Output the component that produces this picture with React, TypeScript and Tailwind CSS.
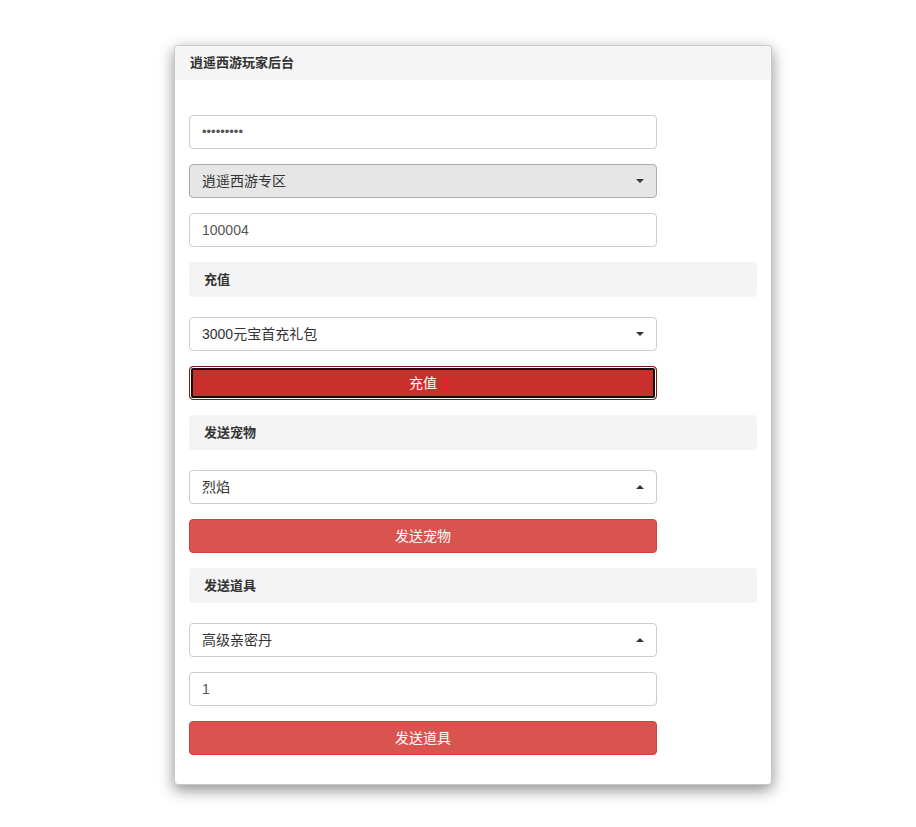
const font = { fontFamily: '"Liberation Sans", "Noto Sans CJK SC", sans-serif' };

const Caret = ({ up }: { up?: boolean }) => (
  <span
    className={
      up
        ? 'block w-0 h-0 border-x-[4px] border-x-transparent border-b-[4px] border-b-[#333]'
        : 'block w-0 h-0 border-x-[4px] border-x-transparent border-t-[4px] border-t-[#333]'
    }
  />
);

const TextField = ({ value }: { value: string }) => (
  <div className="w-[468px] h-[34px] border border-[#ccc] rounded-[4px] bg-white px-3 flex items-center text-[14px] text-[#555]">
    {value}
  </div>
);

const SelectField = ({ value, up, gray }: { value: string; up?: boolean; gray?: boolean }) => (
  <div
    className={
      'w-[468px] h-[34px] border rounded-[4px] pl-3 pr-[12px] flex items-center justify-between text-[14px] text-[#333] ' +
      (gray ? 'bg-[#e6e6e6] border-[#adadad]' : 'bg-white border-[#ccc]')
    }
  >
    <span>{value}</span>
    <Caret up={up} />
  </div>
);

const RedButton = ({ label, active }: { label: string; active?: boolean }) => (
  <div
    className={
      'w-[468px] h-[34px] rounded-[4px] flex items-center justify-center text-[14px] text-white ' +
      (active
        ? 'bg-[#c9302c] border border-[#761c19] shadow-[inset_0_0_0_1px_#ffffff,inset_0_0_0_3px_#1c0909]'
        : 'bg-[#d9534f] border border-[#d43f3a]')
    }
  >
    {label}
  </div>
);

const SectionTitle = ({ title }: { title: string }) => (
  <div className="w-[568px] h-[35px] bg-[#f4f4f4] rounded-[4px] px-[15px] flex items-center text-[13px] font-bold text-[#333]">
    {title}
  </div>
);

export default function App() {
  return (
    <div className="min-h-screen bg-white pt-[45px] pb-[42px]" style={font}>
      <div className="ml-[174px] w-[598px] bg-white border border-[#c8c8c8] rounded-[4px] shadow-[0_5px_15px_rgba(0,0,0,0.45)]">
        <div className="h-[34px] bg-[#f5f5f5] rounded-t-[4px] px-[15px] flex items-center text-[13px] font-bold text-[#333]">
          逍遥西游玩家后台
        </div>
        <div className="px-[14px] pt-[35px] pb-[29px] flex flex-col">
          <div className="flex flex-col gap-[15px]">
            <div className="w-[468px] h-[34px] border border-[#ccc] rounded-[4px] bg-white px-3 flex items-center text-[13px] text-[#555]">
              •••••••••
            </div>
            <SelectField value="逍遥西游专区" gray />
            <TextField value="100004" />
          </div>

          <div className="mt-[15px]">
            <SectionTitle title="充值" />
          </div>
          <div className="mt-[20px] flex flex-col gap-[15px]">
            <SelectField value="3000元宝首充礼包" />
            <RedButton label="充值" active />
          </div>

          <div className="mt-[15px]">
            <SectionTitle title="发送宠物" />
          </div>
          <div className="mt-[20px] flex flex-col gap-[15px]">
            <SelectField value="烈焰" up />
            <RedButton label="发送宠物" />
          </div>

          <div className="mt-[15px]">
            <SectionTitle title="发送道具" />
          </div>
          <div className="mt-[20px] flex flex-col gap-[15px]">
            <SelectField value="高级亲密丹" up />
            <TextField value="1" />
            <RedButton label="发送道具" />
          </div>
        </div>
      </div>
    </div>
  );
}
